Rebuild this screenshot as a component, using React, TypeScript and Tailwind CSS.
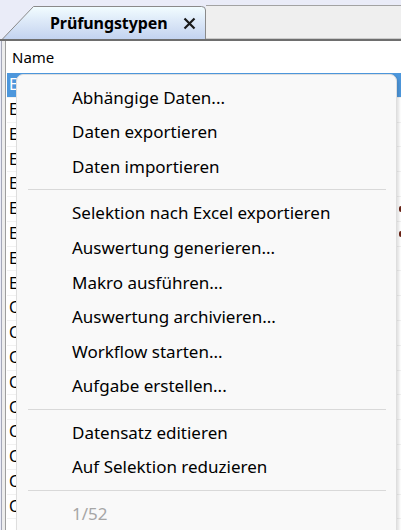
import React from "react";

const font = { fontFamily: '"Noto Sans", "Open Sans", sans-serif' };

type Entry = { label: string; disabled?: boolean } | "sep";

const menu: Entry[] = [
  { label: "Abhängige Daten..." },
  { label: "Daten exportieren" },
  { label: "Daten importieren" },
  "sep",
  { label: "Selektion nach Excel exportieren" },
  { label: "Auswertung generieren..." },
  { label: "Makro ausführen..." },
  { label: "Auswertung archivieren..." },
  { label: "Workflow starten..." },
  { label: "Aufgabe erstellen..." },
  "sep",
  { label: "Datensatz editieren" },
  { label: "Auf Selektion reduzieren" },
  "sep",
  { label: "1/52", disabled: true },
];

const rows = [
  "E", "E", "E", "E", "E", "E", "E", "E", "E",
  "C", "C", "C", "C", "C", "C", "C", "C", "C",
];

function TabShape() {
  return (
    <svg className="absolute inset-0" width="204" height="34" viewBox="0 0 204 34">
      <defs>
        <linearGradient id="tabfill" x1="0" y1="0" x2="0" y2="1">
          <stop offset="0" stopColor="#f2fdff" />
          <stop offset="0.45" stopColor="#dde9f8" />
          <stop offset="1" stopColor="#c3d3f0" />
        </linearGradient>
      </defs>
      <path
        d="M0.5 34 L31.5 1.5 H199.5 Q203.5 1.5 203.5 5 V34"
        fill="url(#tabfill)"
        stroke="#8a8a8a"
        strokeWidth="1"
      />
    </svg>
  );
}

export default function App() {
  return (
    <div
      className="relative w-[401px] h-[530px] overflow-hidden bg-[#eaecf8] text-black"
      style={font}
    >
      <div className="h-[5px]" />
      <div className="flex h-[34px]">
        <div className="w-[2px]" />
        <div className="relative w-[204px] shrink-0">
          <TabShape />
          <div className="relative flex h-full items-center pl-[48px] pt-[2px]">
            <span className="text-[16px] font-bold leading-none tracking-[-0.1px]">
              Prüfungstypen
            </span>
            <svg className="ml-[16px]" width="13" height="13" viewBox="0 0 13 13">
              <path d="M1.5 1.5 L11.5 11.5 M11.5 1.5 L1.5 11.5" stroke="#1a1a1a" strokeWidth="2.2" />
            </svg>
          </div>
        </div>
        <div className="flex-1 bg-[#efefef] border-t border-[#a3a3a3] border-b border-b-[#cacaca]" />
      </div>
      <div className="h-[2px] bg-[#6e6e6e]" />
      <div className="ml-[1px] h-full border-l border-[#a4a7b8] bg-[#ededed] pl-[3px]">
        <div className="h-full border-l border-[#9e9e9e] bg-white">
          <div className="flex h-[32px] items-center pl-[6px] text-[15px]">Name</div>
          <div className="pl-[1px]">
            {rows.map((r, i) => (
              <div
                key={i}
                className={`flex h-[24.8px] items-center border-b border-[#f1f1f1] text-[15.5px] ${
                  i === 0 ? "bg-[#4d97dc] text-white" : ""
                }`}
              >
                <span className="w-[392px] shrink-0 pl-[2px]">{r}</span>
                {(i === 5 || i === 6) && (
                  <div className="h-[6px] w-[3px] rounded-l-[2px] bg-[#6b2416]" />
                )}
              </div>
            ))}
          </div>
        </div>
      </div>

      <div className="absolute left-[16px] right-[4px] top-[74px] bottom-[-12px] rounded-[7px] border border-[#dedede] bg-[#f9f9f9] pt-[5px] shadow-[2px_2px_3px_rgba(0,0,0,0.12)]">
        {menu.map((m, i) =>
          m === "sep" ? (
            <div key={i} className="flex h-[12px] items-center pl-[11px] pr-[10px]">
              <div className="h-px w-full bg-[#d9d9d9]" />
            </div>
          ) : (
            <div
              key={i}
              className={`flex h-[34.6px] items-center pl-[55px] text-[17px] ${
                m.disabled ? "text-[#a6a6a6]" : "text-black"
              }`}
            >
              {m.label}
            </div>
          )
        )}
      </div>
    </div>
  );
}
